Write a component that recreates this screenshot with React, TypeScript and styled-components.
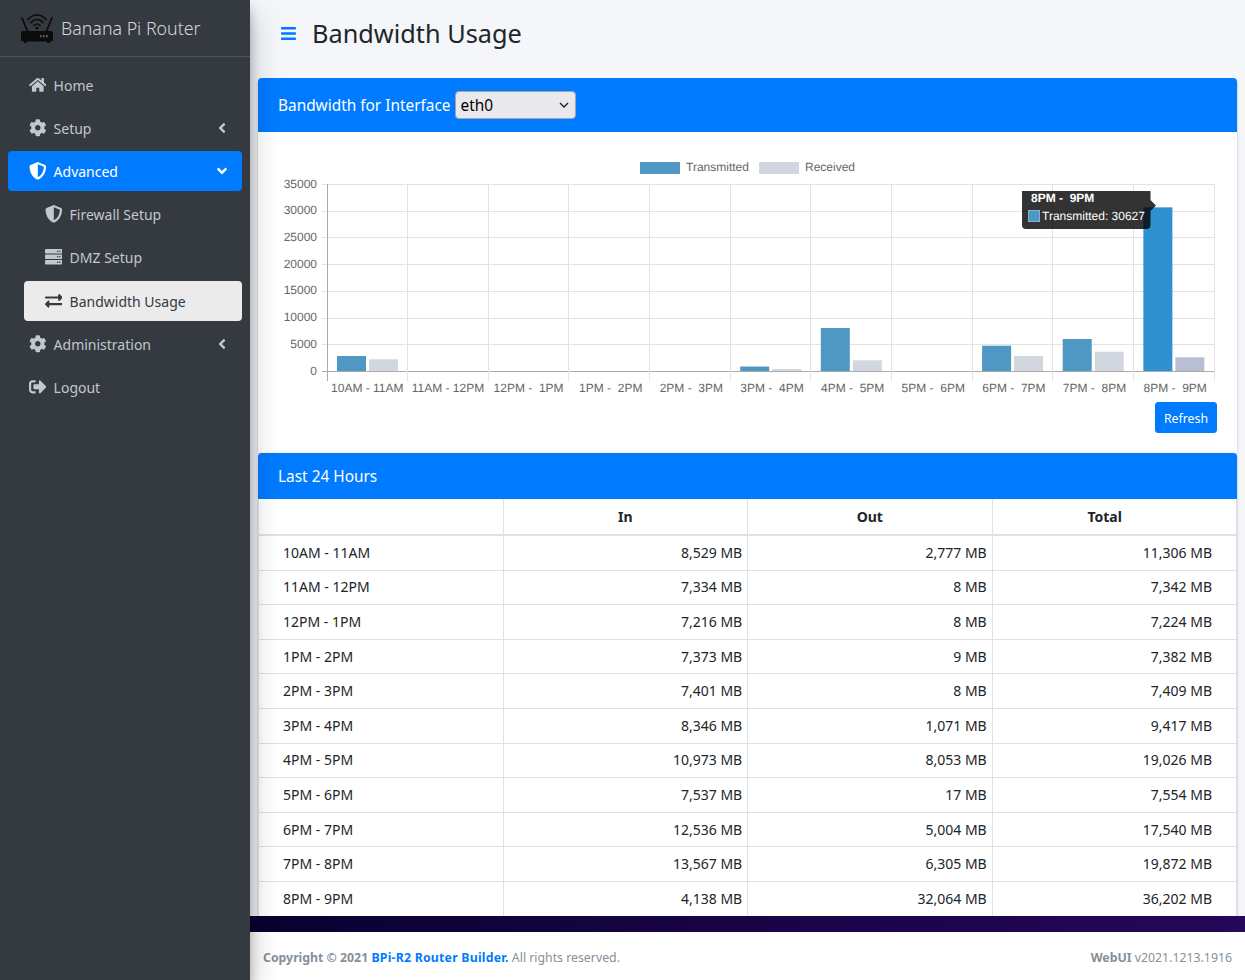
import React from "react";
import styled, { createGlobalStyle } from "styled-components";
import {
  FaAngleDown,
  FaAngleLeft,
  FaBars,
  FaCog,
  FaExchangeAlt,
  FaHome,
  FaServer,
  FaShieldAlt,
  FaSignOutAlt,
} from "react-icons/fa";

const GlobalStyle = createGlobalStyle`
  * { box-sizing: border-box; }
  html, body { margin: 0; padding: 0; height: 100%; }
  body {
    font-family: "Noto Sans", Lato, sans-serif;
    font-size: 14px;
    line-height: 24px;
    color: #212529;
    background: #f4f6f9;
  }
`;

const Layout = styled.div`
  display: flex;
  width: 100%;
  height: 100vh;
  overflow: hidden;
`;

const Sidebar = styled.aside`
  position: relative;
  z-index: 2;
  flex: 0 0 250px;
  background: #343a40;
  box-shadow: 0 14px 28px rgba(0, 0, 0, 0.25), 0 10px 10px rgba(0, 0, 0, 0.22);
`;

const Brand = styled.div`
  display: flex;
  align-items: center;
  gap: 7px;
  height: 57px;
  padding: 0 0 0 20px;
  border-bottom: 1px solid #4b545c;
  color: rgba(255, 255, 255, 0.8);
  font-size: 17.8px;
  font-weight: 300;
`;

const Nav = styled.nav`
  display: flex;
  flex-direction: column;
  gap: 3px;
  padding: 8px 8px 0;
`;

const NavItem = styled.a<{ $active?: boolean; $sub?: boolean; $current?: boolean }>`
  display: flex;
  align-items: center;
  height: 40px;
  padding: 0 16px;
  margin-left: ${(p) => (p.$sub ? "16px" : "0")};
  margin-top: ${(p) => (p.$current ? "1px" : "0")};
  border-radius: 4px;
  color: ${(p) => (p.$active ? "#fff" : p.$current ? "#343a40" : "#c2c7d0")};
  background: ${(p) =>
    p.$active ? "#007bff" : p.$current ? "rgba(255,255,255,.9)" : "transparent"};
`;

const NavIcon = styled.span`
  display: flex;
  flex: 0 0 25.6px;
  justify-content: center;
  margin: 0 3.2px 0 0.8px;
  font-size: 17.6px;

  svg {
    width: auto;
    height: 1em;
  }
`;

const NavLabel = styled.span`
  margin-top: 2px;
`;

const Caret = styled.span`
  display: flex;
  margin-left: auto;
  margin-right: -4px;
  font-size: 16px;
`;

const Main = styled.div`
  display: flex;
  flex: 1;
  min-width: 0;
  flex-direction: column;
`;

const PageHeader = styled.header`
  display: flex;
  flex: 0 0 78px;
  align-items: center;
  gap: 15px;
  padding: 0 0 12px 30px;
`;

const MenuButton = styled.span`
  display: flex;
  color: #007bff;
  font-size: 17px;
`;

const Title = styled.h1`
  margin: 0;
  font-size: 25.3px;
  font-weight: 400;
  line-height: 34px;
  color: #212529;
`;

const Content = styled.main`
  flex: 1;
  min-height: 0;
  overflow: hidden;
  padding: 0 8px;
`;

const Card = styled.section`
  background: #fff;
  box-shadow: 0 0 1px rgba(0, 0, 0, 0.125), 0 1px 3px rgba(0, 0, 0, 0.2);
  border-radius: 4px 4px 0 0;
`;

const CardHeader = styled.div<{ $tall?: boolean }>`
  display: flex;
  align-items: center;
  gap: 4px;
  height: ${(p) => (p.$tall ? "54px" : "46px")};
  padding: 0 20px;
  background: #007bff;
  border-radius: 4px 4px 0 0;
  color: #fff;
  font-size: 15.4px;
`;

const CardTitle = styled.span`
  margin-top: 2px;
`;

const selectArrow =
  "data:image/svg+xml,%3Csvg xmlns='http://www.w3.org/2000/svg' width='10' height='6'%3E%3Cpath d='M1 1l4 4 4-4' fill='none' stroke='%23222' stroke-width='1.4'/%3E%3C/svg%3E";

const InterfaceSelect = styled.select`
  appearance: none;
  width: 121px;
  height: 28px;
  padding: 0 0 0 5px;
  background: #e9e9ed url("${selectArrow}") no-repeat right 6px center;
  border: 1px solid #a3a3ad;
  border-radius: 4px;
  color: #000;
  font-family: inherit;
  font-size: 15.4px;
`;

const CardBody = styled.div`
  display: flex;
  flex-direction: column;
  padding: 20px;
`;

const ChartSvg = styled.svg`
  display: block;
  width: 939px;
  height: 250px;
  font-family: "Liberation Sans", Arial, sans-serif;
  font-size: 12px;
  text-rendering: geometricPrecision;
`;

const RefreshButton = styled.button`
  align-self: flex-end;
  width: 62px;
  height: 31px;
  padding: 1px 0 0;
  background: #007bff;
  border: 1px solid #007bff;
  border-radius: 3px;
  color: #fff;
  font-family: inherit;
  font-size: 12.3px;
`;

const Table = styled.table`
  width: 100%;
  table-layout: fixed;
  border-collapse: collapse;
  border-left: 1px solid #dee2e6;
`;

const HeadCell = styled.th<{ $wide?: boolean }>`
  height: 36px;
  padding: 4.8px ${(p) => (p.$wide ? "24px" : "4.8px")} 4.8px 4.8px;
  border: 1px solid #dee2e6;
  border-top: 0;
  border-bottom-width: 2px;
  font-weight: 700;
  text-align: center;
`;

const LabelCell = styled.td`
  height: 34.6px;
  padding: 4.8px 4.8px 4.8px 24px;
  border: 1px solid #dee2e6;
`;

const ValueCell = styled.td<{ $wide?: boolean }>`
  padding: 4.8px ${(p) => (p.$wide ? "24px" : "4.8px")} 4.8px 4.8px;
  border: 1px solid #dee2e6;
  text-align: right;
`;

const FooterBand = styled.div`
  flex: 0 0 16px;
  background: linear-gradient(90deg, #090130, #26075a);
`;

const Footer = styled.footer`
  display: flex;
  flex: 0 0 48px;
  align-items: center;
  justify-content: space-between;
  padding: 4px 13px 0;
  background: #fff;
  color: #869099;
  font-size: 12.3px;
`;

const FooterLink = styled.a`
  color: #007bff;
  font-weight: 700;
  letter-spacing: 0.22px;
`;

const RouterLogo = () => (
  <svg width="34" height="32" viewBox="0 0 34 32" fill="none">
    <g stroke="#0b0b0b" strokeWidth="1.7" strokeLinecap="round">
      <path d="M2 6 L7.5 19" />
      <path d="M32 6 L26.5 19" />
      <path d="M8 7.5 C13 1.5 21 1.5 26 7.5" />
      <path d="M11 10.5 C14.5 6.5 19.5 6.5 23 10.5" />
      <path d="M14 13.5 C16 11.5 18 11.5 20 13.5" />
    </g>
    <circle cx="17" cy="16" r="1.6" fill="#0b0b0b" />
    <rect x="1" y="19" width="32" height="10.5" rx="2" fill="#0b0b0b" />
    <rect x="4" y="29" width="3" height="2" fill="#0b0b0b" />
    <rect x="27" y="29" width="3" height="2" fill="#0b0b0b" />
    <g fill="#5c5f63">
      <rect x="20" y="23" width="1.6" height="2.4" />
      <rect x="23" y="23" width="1.6" height="2.4" />
      <rect x="26" y="23" width="1.6" height="2.4" />
    </g>
  </svg>
);

const AXIS_LEFT = 327;
const AXIS_RIGHT = 1214;
const AXIS_TOP = 184;
const AXIS_BOTTOM = 371;
const SLOT = (AXIS_RIGHT - AXIS_LEFT) / 11;
const toY = (v: number) => AXIS_BOTTOM - (v / 35000) * (AXIS_BOTTOM - AXIS_TOP);

const chartData: { label: string; tx: number; rx: number }[] = [
  { label: "10AM - 11AM", tx: 2800, rx: 2190 },
  { label: "11AM - 12PM", tx: 0, rx: 0 },
  { label: "12PM -  1PM", tx: 0, rx: 0 },
  { label: "1PM -  2PM", tx: 0, rx: 0 },
  { label: "2PM -  3PM", tx: 0, rx: 0 },
  { label: "3PM -  4PM", tx: 840, rx: 370 },
  { label: "4PM -  5PM", tx: 8053, rx: 2000 },
  { label: "5PM -  6PM", tx: 0, rx: 0 },
  { label: "6PM -  7PM", tx: 4735, rx: 2800 },
  { label: "7PM -  8PM", tx: 5990, rx: 3610 },
  { label: "8PM -  9PM", tx: 30627, rx: 2560 },
];

const BandwidthChart = () => (
  <ChartSvg viewBox="278 152 939 250">
    <rect x="640" y="162" width="40" height="12" fill="#4f98c3" />
    <text x="686" y="171" fill="#666">Transmitted</text>
    <rect x="759" y="162" width="40" height="12" fill="#d2d6de" />
    <text x="805" y="171" fill="#666">Received</text>

    {[0, 5000, 10000, 15000, 20000, 25000, 30000, 35000].map((v) => (
      <g key={v}>
        <line
          x1={AXIS_LEFT - 5}
          x2={AXIS_RIGHT}
          y1={Math.round(toY(v)) + 0.5}
          y2={Math.round(toY(v)) + 0.5}
          stroke={v === 0 ? "#aaa" : "#e3e3e3"}
        />
        <text x={AXIS_LEFT - 10} y={toY(v) + 3.5} textAnchor="end" fill="#666">
          {v}
        </text>
      </g>
    ))}

    {Array.from({ length: 12 }, (_, i) => {
      const x = Math.floor(AXIS_LEFT + i * SLOT) + 0.5;
      return (
        <line
          key={i}
          x1={x}
          x2={x}
          y1={AXIS_TOP}
          y2={AXIS_BOTTOM + 10}
          stroke={i === 0 ? "#aaa" : "#e3e3e3"}
        />
      );
    })}

    {chartData.map((d, i) => {
      const start = AXIS_LEFT + i * SLOT;
      const hovered = i === chartData.length - 1;
      // the short labels sit a little right of the slot centre
      const labelX = start + SLOT / 2 + (d.label.length < 11 ? 1.5 : 0);
      return (
        <g key={d.label}>
          <rect
            x={start + 10}
            y={toY(d.tx)}
            width={29}
            height={AXIS_BOTTOM - toY(d.tx)}
            fill={hovered ? "#2f91cf" : "#4f98c3"}
          />
          <rect
            x={start + 42}
            y={toY(d.rx)}
            width={29}
            height={AXIS_BOTTOM - toY(d.rx)}
            fill={hovered ? "#b8bfd2" : "#d2d6de"}
          />
          <text x={labelX} y={392} textAnchor="middle" fill="#666" xmlSpace="preserve">
            {d.label}
          </text>
        </g>
      );
    })}

    <path
      d="M1022 191 H1150.5 V200 L1156 205.5 L1150.5 211 V225 Q1150.5 229 1146.5 229 H1026 Q1022 229 1022 225 Z"
      fill="rgba(0,0,0,0.8)"
    />
    <text x="1031" y="202" fontWeight="700" fill="#fff" xmlSpace="preserve">8PM -  9PM</text>
    <rect x="1028.5" y="210.5" width="11" height="11" fill="#4f98c3" stroke="#7fb7da" />
    <text x="1042" y="220" fill="#fff">Transmitted: 30627</text>
  </ChartSvg>
);

const usage = [
  ["10AM - 11AM", "8,529 MB", "2,777 MB", "11,306 MB"],
  ["11AM - 12PM", "7,334 MB", "8 MB", "7,342 MB"],
  ["12PM - 1PM", "7,216 MB", "8 MB", "7,224 MB"],
  ["1PM - 2PM", "7,373 MB", "9 MB", "7,382 MB"],
  ["2PM - 3PM", "7,401 MB", "8 MB", "7,409 MB"],
  ["3PM - 4PM", "8,346 MB", "1,071 MB", "9,417 MB"],
  ["4PM - 5PM", "10,973 MB", "8,053 MB", "19,026 MB"],
  ["5PM - 6PM", "7,537 MB", "17 MB", "7,554 MB"],
  ["6PM - 7PM", "12,536 MB", "5,004 MB", "17,540 MB"],
  ["7PM - 8PM", "13,567 MB", "6,305 MB", "19,872 MB"],
  ["8PM - 9PM", "4,138 MB", "32,064 MB", "36,202 MB"],
];

export default function App() {
  return (
    <Layout>
      <GlobalStyle />
      <Sidebar>
        <Brand>
          <RouterLogo />
          Banana Pi Router
        </Brand>
        <Nav>
          <NavItem>
            <NavIcon><FaHome /></NavIcon>
            <NavLabel>Home</NavLabel>
          </NavItem>
          <NavItem>
            <NavIcon><FaCog /></NavIcon>
            <NavLabel>Setup</NavLabel>
            <Caret><FaAngleLeft /></Caret>
          </NavItem>
          <NavItem $active>
            <NavIcon><FaShieldAlt /></NavIcon>
            <NavLabel>Advanced</NavLabel>
            <Caret><FaAngleDown /></Caret>
          </NavItem>
          <NavItem $sub>
            <NavIcon><FaShieldAlt /></NavIcon>
            <NavLabel>Firewall Setup</NavLabel>
          </NavItem>
          <NavItem $sub>
            <NavIcon><FaServer /></NavIcon>
            <NavLabel>DMZ Setup</NavLabel>
          </NavItem>
          <NavItem $sub $current>
            <NavIcon><FaExchangeAlt /></NavIcon>
            <NavLabel>Bandwidth Usage</NavLabel>
          </NavItem>
          <NavItem>
            <NavIcon><FaCog /></NavIcon>
            <NavLabel>Administration</NavLabel>
            <Caret><FaAngleLeft /></Caret>
          </NavItem>
          <NavItem>
            <NavIcon><FaSignOutAlt /></NavIcon>
            <NavLabel>Logout</NavLabel>
          </NavItem>
        </Nav>
      </Sidebar>
      <Main>
        <PageHeader>
          <MenuButton><FaBars /></MenuButton>
          <Title>Bandwidth Usage</Title>
        </PageHeader>
        <Content>
          <Card>
            <CardHeader $tall>
              <CardTitle>Bandwidth for Interface</CardTitle>
              <InterfaceSelect defaultValue="eth0">
                <option>eth0</option>
              </InterfaceSelect>
            </CardHeader>
            <CardBody>
              <BandwidthChart />
              <RefreshButton>Refresh</RefreshButton>
            </CardBody>
          </Card>
          <Card>
            <CardHeader><CardTitle>Last 24 Hours</CardTitle></CardHeader>
            <Table>
              <thead>
                <tr>
                  <HeadCell />
                  <HeadCell>In</HeadCell>
                  <HeadCell>Out</HeadCell>
                  <HeadCell $wide>Total</HeadCell>
                </tr>
              </thead>
              <tbody>
                {usage.map(([label, inMb, outMb, total]) => (
                  <tr key={label}>
                    <LabelCell>{label}</LabelCell>
                    <ValueCell>{inMb}</ValueCell>
                    <ValueCell>{outMb}</ValueCell>
                    <ValueCell $wide>{total}</ValueCell>
                  </tr>
                ))}
              </tbody>
            </Table>
          </Card>
        </Content>
        <FooterBand />
        <Footer>
          <span>
            <b>Copyright © 2021 </b>
            <FooterLink>BPi-R2 Router Builder.</FooterLink> All rights reserved.
          </span>
          <span>
            <b>WebUI</b> v2021.1213.1916
          </span>
        </Footer>
      </Main>
    </Layout>
  );
}
